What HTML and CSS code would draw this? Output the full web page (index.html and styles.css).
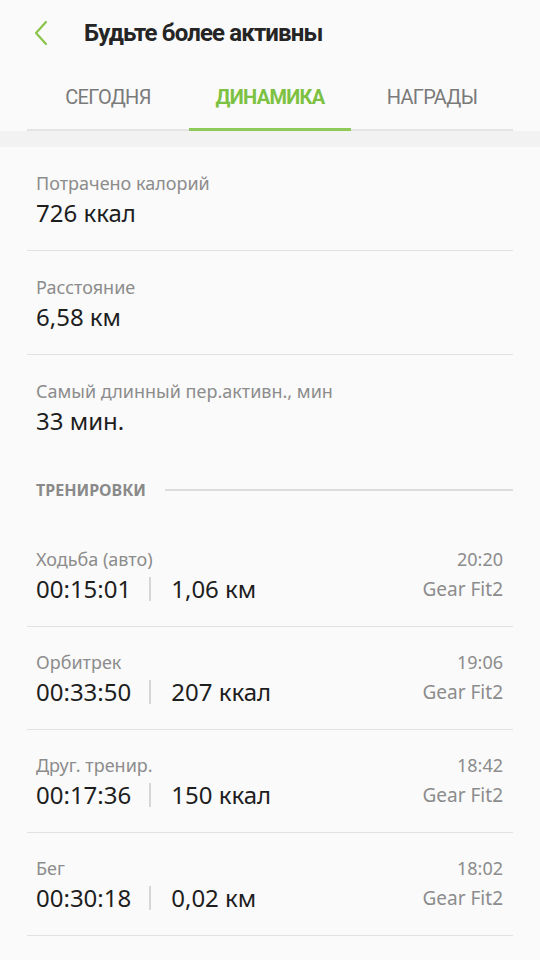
FILE: index.html
```html
<!DOCTYPE html>
<html lang="ru">

<head>
    <meta charset="UTF-8">
    <meta name="viewport" content="width=device-width, initial-scale=1.0">
    <link rel="stylesheet" href="styles.css">
    <title>Будьте более активны</title>
</head>

<body>

    <div class="header">
        <svg class="back" width="16" height="26" viewBox="0 0 16 26">
            <path d="M13 2 L3 13 L13 24" fill="none" stroke="#8bc34a" stroke-width="2.2" stroke-linecap="round" stroke-linejoin="round" />
        </svg>
        <h1>Будьте более активны</h1>
    </div>

    <div class="tabs">
        <div class="tab">СЕГОДНЯ</div>
        <div class="tab active">ДИНАМИКА</div>
        <div class="tab">НАГРАДЫ</div>
    </div>

    <div class="band"></div>

    <div class="list">
        <div class="stat">
            <div class="label">Потрачено калорий</div>
            <div class="value">726 ккал</div>
        </div>
        <div class="stat">
            <div class="label">Расстояние</div>
            <div class="value">6,58 км</div>
        </div>
        <div class="stat last">
            <div class="label">Самый длинный пер.активн., мин</div>
            <div class="value">33 мин.</div>
        </div>

        <div class="section">
            <span>ТРЕНИРОВКИ</span>
            <div class="section-line"></div>
        </div>

        <div class="workout">
            <div class="w-left">
                <div class="label">Ходьба (авто)</div>
                <div class="value">00:15:01<span class="sep"></span>1,06 км</div>
            </div>
            <div class="w-right">
                <div class="label">20:20</div>
                <div class="device">Gear Fit2</div>
            </div>
        </div>
        <div class="workout">
            <div class="w-left">
                <div class="label">Орбитрек</div>
                <div class="value">00:33:50<span class="sep"></span>207 ккал</div>
            </div>
            <div class="w-right">
                <div class="label">19:06</div>
                <div class="device">Gear Fit2</div>
            </div>
        </div>
        <div class="workout">
            <div class="w-left">
                <div class="label">Друг. тренир.</div>
                <div class="value">00:17:36<span class="sep"></span>150 ккал</div>
            </div>
            <div class="w-right">
                <div class="label">18:42</div>
                <div class="device">Gear Fit2</div>
            </div>
        </div>
        <div class="workout">
            <div class="w-left">
                <div class="label">Бег</div>
                <div class="value">00:30:18<span class="sep"></span>0,02 км</div>
            </div>
            <div class="w-right">
                <div class="label">18:02</div>
                <div class="device">Gear Fit2</div>
            </div>
        </div>
    </div>

</body>

</html>
```

FILE: styles.css
```css
body {
    margin: 0;
    background-color: #fafafa;
    font-family: 'Noto Sans', sans-serif;
    color: #222;
}

.header {
    height: 72px;
    display: flex;
    align-items: center;
    padding-left: 33px;
}

.back {
    display: block;
    margin-top: -6px;
}

.header h1 {
    margin: 0 0 0 35px;
    margin-top: -6px;
    font-family: 'Roboto', sans-serif;
    font-size: 24px;
    font-weight: 700;
    color: #252525;
    letter-spacing: -0.85px;
}

.tabs {
    display: flex;
    margin: 0 27px;
    height: 59px;
    border-bottom: 2px solid #e4e4e4;
    box-sizing: border-box;
}

.tab {
    flex: 1;
    display: flex;
    align-items: center;
    justify-content: center;
    padding-bottom: 6px;
    font-family: 'Roboto', sans-serif;
    font-size: 20px;
    color: #7a7a7a;
    letter-spacing: -0.7px;
    margin-bottom: -2px;
    border-bottom: 3px solid transparent;
}

.tab.active {
    color: #7dc142;
    font-weight: 700;
    border-bottom-color: #8fc957;
}

.band {
    height: 16px;
    background-color: #f2f2f2;
}

.list {
    margin: 0 27px;
}

.stat {
    padding: 24px 9px 19px;
    border-bottom: 1px solid #e2e2e2;
}

.stat.last {
    border-bottom: none;
}

.label {
    font-size: 18px;
    line-height: 24px;
    color: #8c8c8c;
}

.value {
    font-size: 24px;
    line-height: 36px;
    color: #1e1e1e;
    display: flex;
    align-items: center;
}

.sep {
    display: inline-block;
    width: 2px;
    height: 24px;
    background-color: #d6d6d6;
    margin: 0 20px 0 18px;
}

.section {
    display: flex;
    align-items: center;
    height: 68px;
    padding-left: 9px;
    margin-top: -2px;
}

.section span {
    font-size: 16px;
    font-weight: 700;
    color: #8a8a8a;
}

.section-line {
    flex: 1;
    height: 2px;
    background-color: #dcdcdc;
    margin-left: 19px;
}

.workout {
    display: flex;
    justify-content: space-between;
    padding: 23px 10px 19px 9px;
    border-bottom: 1px solid #e2e2e2;
}

.w-right {
    text-align: right;
}

.device {
    font-size: 19px;
    line-height: 36px;
    color: #8c8c8c;
}
```
